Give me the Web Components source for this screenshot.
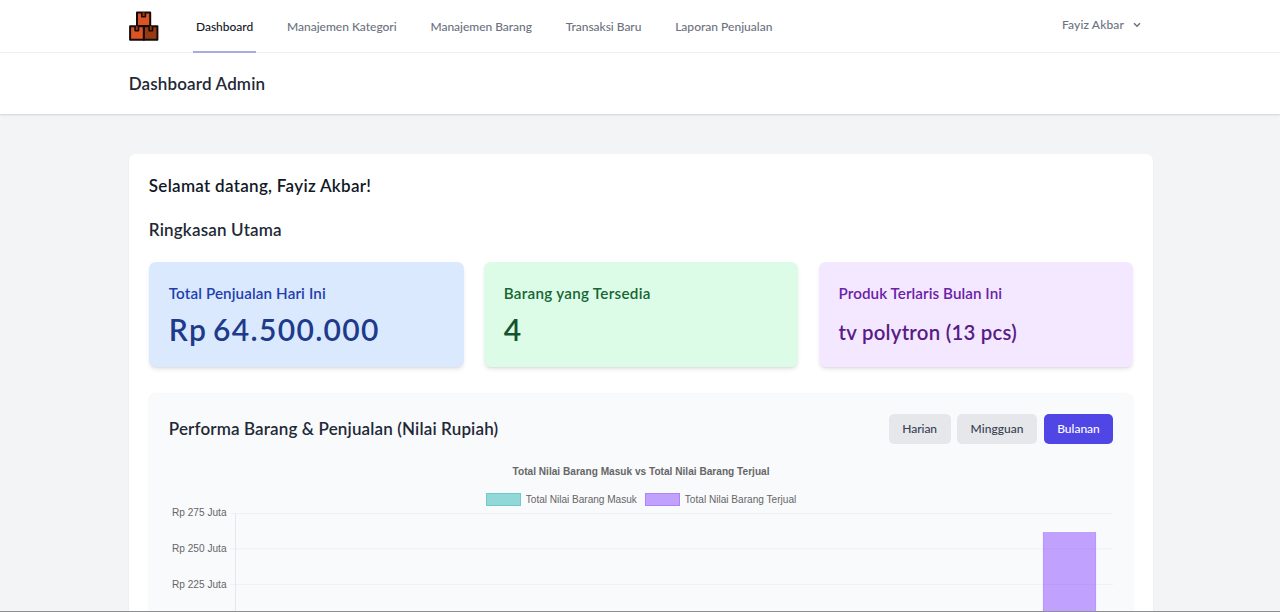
<!DOCTYPE html>
<html lang="id">
<head>
<meta charset="utf-8">
<title>Dashboard Admin</title>
<style>
html,body{margin:0;height:612px;overflow:hidden;background:#f3f4f6}
body{font-family:Lato,"Liberation Sans",sans-serif}
</style>
</head>
<body>
<admin-page></admin-page>
<script>
const define = (name, html, setup) => customElements.define(name, class extends HTMLElement {
  connectedCallback() {
    if (this.shadowRoot) return;
    const t = document.createElement('template');
    t.innerHTML = html;
    this.attachShadow({mode: 'open'}).append(t.content.cloneNode(true));
    if (setup) setup(this, this.shadowRoot);
  }
});

/* One line of text whose tracking is tuned so that it spans the width in "w". */
define('fit-text', `<style>:host{display:block;white-space:nowrap}span{display:inline-block}</style><span><slot></slot></span>`,
  (el, root) => {
    const s = root.querySelector('span'), w = +el.getAttribute('w');
    el.style.width = w + 'px';
    s.style.letterSpacing = (w - s.getBoundingClientRect().width) / el.textContent.length + 'px';
  });

define('box-logo', `<style>:host{display:block;width:30px;height:30px}svg{display:block}</style>
<svg width="30" height="30" viewBox="0 0 30 30" stroke="#130b08" stroke-width="2" stroke-linejoin="round">
<path fill="#dc5426" d="M8 1.4h13.2v13.6H8zM1.1 15.3h13.8v13.4H1.1z"/><path fill="#983a12" d="M14.9 15.3h13.5v13.4H14.9z"/>
<path fill="#983a12" stroke-width="1.6" d="M12.8 1.4v4.4h3.6V1.4M6.1 15.3v4.4h3.4v-4.4M20.1 15.3v4.4h3.4v-4.4"/></svg>`);

define('nav-item', `<style>
:host{display:flex;align-items:center;box-sizing:border-box;height:53px;padding:1px 3px 0;border-bottom:2px solid transparent;font-size:12px;font-weight:500;color:#6b7280}
:host([active]){color:#111827;border-color:#a5acdf}</style><slot></slot>`);

define('top-nav', `<style>
:host{display:flex;box-sizing:border-box;height:53px;padding:0 139px 0 129px;background:#fff;border-bottom:1px solid #eef0f2}
box-logo{margin:11px 34px 0 0}nav{display:flex;gap:27.8px}
.user{display:flex;align-items:center;gap:9px;height:49px;margin-left:auto;font-size:12px;font-weight:500;color:#6b7280}svg{margin-top:1px}</style>
<box-logo></box-logo>
<nav>
<nav-item active><fit-text w="57.2">Dashboard</fit-text></nav-item>
<nav-item><fit-text w="109.7">Manajemen Kategori</fit-text></nav-item>
<nav-item><fit-text w="101.5">Manajemen Barang</fit-text></nav-item>
<nav-item><fit-text w="75.6">Transaksi Baru</fit-text></nav-item>
<nav-item><fit-text w="97.3">Laporan Penjualan</fit-text></nav-item>
</nav>
<div class="user"><fit-text w="62">Fayiz Akbar</fit-text><svg width="8" height="6" viewBox="0 0 8 6" fill="none" stroke="#6b7280" stroke-width="1.5"><path d="M1 1.2l3 3 3-3"/></svg></div>`);

define('page-header', `<style>
:host{display:flex;align-items:center;box-sizing:border-box;height:61px;padding:0 0 1px 128.7px;background:#fff;box-shadow:0 1px 2px rgba(0,0,0,.14);font-size:17px;font-weight:600;color:#1f2937}</style><slot></slot>`);

define('stat-card', `<style>
:host{display:block;box-sizing:border-box;height:104.5px;padding:21px 20px 0;border-radius:6.5px;background:var(--bg);color:var(--strong);box-shadow:0 3px 5px -1px rgba(0,0,0,.1),0 2px 3px -2px rgba(0,0,0,.12)}
.label{height:21px;line-height:21px;font-size:15.2px;font-weight:600;color:var(--soft)}
.value{margin-top:7px;height:36px;line-height:36px;font-size:30px;font-weight:600;word-spacing:-3px}
:host([compact]) .value{margin-top:10px;font-size:20.4px;word-spacing:0}</style>
<div class="label"><slot name="label"></slot></div><div class="value"><slot></slot></div>`);

define('period-button', `<style>
:host{display:flex;align-items:center;height:30.5px;padding:0 13.5px;border-radius:5px;background:#e5e7eb;color:#374151;font-size:12px;font-weight:500}
:host([active]){background:#4f46e5;color:#fff}</style><slot></slot>`);

define('chart-legend', `<style>
:host{display:flex;justify-content:center;align-items:center;gap:8px;height:13px;font:10.1px "Liberation Sans",sans-serif;color:#666}
div{display:flex;align-items:center;gap:5px}
i{box-sizing:border-box;width:35px;height:12.5px;border:1px solid #6fcaca;background:#92d8d8}i.v{border-color:#ad84fb;background:#c0a1fd}</style>
<div><i></i><fit-text w="111">Total Nilai Barang Masuk</fit-text></div>
<div><i class="v"></i><fit-text w="111.5">Total Nilai Barang Terjual</fit-text></div>`);

define('bar-plot', `<style>:host{display:block}svg{display:block}text{font:10.1px "Liberation Sans",sans-serif;fill:#666}</style>
<svg width="944" height="106" viewBox="169 506 944 106">
<path d="M230 513.5h883M230 548.9h883M230 584.5h883" stroke="#eff1f3" fill="none"/>
<path d="M235.5 513v99" stroke="#e5e7e9"/>
<path fill="#c0a1fd" d="M1043 532h53v80h-53z"/><path d="M1043.4 612v-80M1095.6 612v-80" stroke="#b793fb" stroke-width=".8"/>
<path d="M1044 548.9h51M1044 584.5h51" stroke="#ba9cf6"/>
<text x="172" y="516" textLength="54.5">Rp 275 Juta</text><text x="172" y="551.5" textLength="54.5">Rp 250 Juta</text><text x="172" y="588" textLength="54.5">Rp 225 Juta</text></svg>`);

define('chart-panel', `<style>
:host{display:block;box-sizing:border-box;height:300px;padding:19.5px 20px 0;border-radius:6.5px;background:#f9fafc;box-shadow:0 0 2px rgba(0,0,0,.09)}
header{display:flex;justify-content:space-between;align-items:center;height:30.5px}
h3{margin:0;font-size:17px;font-weight:600;color:#1f2937}.buttons{display:flex;gap:6.6px}
.title{display:flex;justify-content:center;margin-top:20.5px;height:14px;font:bold 10.1px/14px "Liberation Sans",sans-serif;color:#666}
chart-legend{margin-top:14.5px}</style>
<header><h3><fit-text w="329.5">Performa Barang &amp; Penjualan (Nilai Rupiah)</fit-text></h3>
<div class="buttons"><period-button><fit-text w="34.7">Harian</fit-text></period-button><period-button><fit-text w="53">Mingguan</fit-text></period-button><period-button active><fit-text w="42.6">Bulanan</fit-text></period-button></div></header>
<div class="title"><fit-text w="257">Total Nilai Barang Masuk vs Total Nilai Barang Terjual</fit-text></div>
<chart-legend></chart-legend><bar-plot></bar-plot>`);

define('admin-page', `<style>
:host{display:block;position:relative;height:612px;overflow:hidden}
main{box-sizing:border-box;width:1024.5px;margin:40px 0 0 128.8px;height:480px;padding:20px 20px 0;border-radius:6.5px;background:#fff;box-shadow:0 1px 2px rgba(0,0,0,.05)}
h2{margin:0;height:24px;line-height:24px;font-size:17px;font-weight:600;color:#111827}
h2.sub{margin-top:20px;color:#1f2937}
.stats{display:grid;grid-template-columns:repeat(3,1fr);gap:20.2px;margin:20px 0 27.5px}
.edge{position:absolute;left:0;right:0;bottom:0;height:1px;background:#8d8f91}</style>
<top-nav></top-nav>
<page-header><fit-text w="136.5">Dashboard Admin</fit-text></page-header>
<main>
<h2><fit-text w="222.5">Selamat datang, Fayiz Akbar!</fit-text></h2>
<h2 class="sub"><fit-text w="133">Ringkasan Utama</fit-text></h2>
<div class="stats">
<stat-card style="--bg:#dbe9fe;--soft:#1e40af;--strong:#1e3a8a"><fit-text slot="label" w="157">Total Penjualan Hari Ini</fit-text><fit-text w="211">Rp 64.500.000</fit-text></stat-card>
<stat-card style="--bg:#dcfce7;--soft:#166534;--strong:#14532d"><fit-text slot="label" w="147">Barang yang Tersedia</fit-text><fit-text w="19">4</fit-text></stat-card>
<stat-card compact style="--bg:#f3e8ff;--soft:#6b21a8;--strong:#581c87"><fit-text slot="label" w="163.5">Produk Terlaris Bulan Ini</fit-text><fit-text w="178.5">tv polytron (13 pcs)</fit-text></stat-card>
</div>
<chart-panel></chart-panel>
</main>
<div class="edge"></div>`);
</script>
</body>
</html>
